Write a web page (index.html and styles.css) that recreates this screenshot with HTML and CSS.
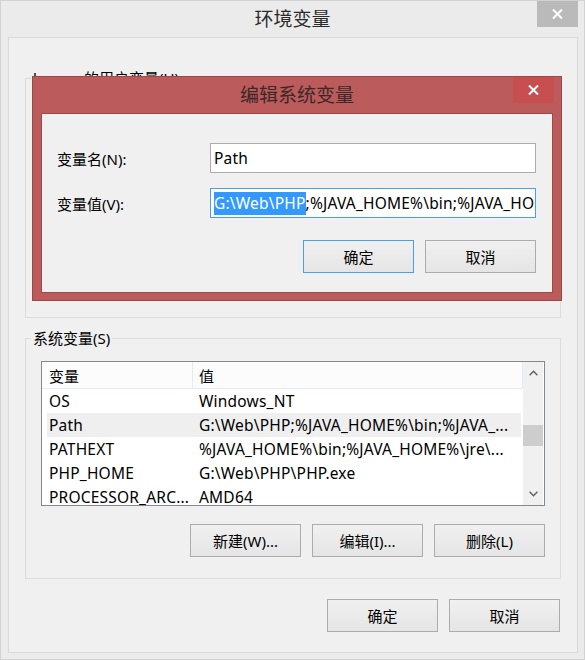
FILE: index.html
```html
<!DOCTYPE html>
<html lang="zh-CN">
<head>
<meta charset="utf-8">
<title>环境变量</title>
<link rel="stylesheet" href="styles.css">
</head>
<body>
<div class="window">
  <div class="titlebar">
    <span class="title">环境变量</span>
    <div class="close close-main"><svg width="11" height="10" viewBox="0 0 11 10"><path d="M1 0.5L10 9.5M10 0.5L1 9.5" stroke="#fff" stroke-width="2"/></svg></div>
  </div>
  <div class="panel">
    <div class="group group-user">
      <span class="legend">lenovo 的用户变量(U)</span>
    </div>
    <div class="group group-sys">
      <span class="legend">系统变量(S)</span>
      <div class="listbox">
        <div class="list-main">
          <div class="list-head">
            <div class="h1">变量</div>
            <div class="h2">值</div>
          </div>
          <div class="rows">
            <div class="row"><div class="c1">OS</div><div class="c2">Windows_NT</div></div>
            <div class="row row-sel"><div class="c1">Path</div><div class="c2">G:\Web\PHP;%JAVA_HOME%\bin;%JAVA_...</div></div>
            <div class="row"><div class="c1">PATHEXT</div><div class="c2">%JAVA_HOME%\bin;%JAVA_HOME%\jre\...</div></div>
            <div class="row"><div class="c1">PHP_HOME</div><div class="c2">G:\Web\PHP\PHP.exe</div></div>
            <div class="row"><div class="c1">PROCESSOR_ARC...</div><div class="c2">AMD64</div></div>
          </div>
        </div>
        <div class="scrollbar">
          <div class="arrow"><svg width="9" height="6" viewBox="0 0 9 6"><path d="M0.6 5.2L4.5 1.2L8.4 5.2" fill="none" stroke="#606060" stroke-width="1.4"/></svg></div>
          <div class="track"><div class="thumb"></div></div>
          <div class="arrow"><svg width="9" height="6" viewBox="0 0 9 6"><path d="M0.6 0.8L4.5 4.8L8.4 0.8" fill="none" stroke="#606060" stroke-width="1.4"/></svg></div>
        </div>
      </div>
      <div class="btnrow">
        <div class="btn">新建(W)...</div>
        <div class="btn">编辑(I)...</div>
        <div class="btn">删除(L)</div>
      </div>
    </div>
    <div class="btnrow main-btns">
      <div class="btn">确定</div>
      <div class="btn">取消</div>
    </div>
  </div>

  <div class="dialog">
    <div class="dlg-title">
      <span class="title dlg-title-text">编辑系统变量</span>
      <div class="close close-dlg"><svg width="11" height="10" viewBox="0 0 11 10"><path d="M1 0.5L10 9.5M10 0.5L1 9.5" stroke="#fff" stroke-width="2"/></svg></div>
    </div>
    <div class="dlg-body">
      <div class="form">
        <div class="lbl">变量名(N):</div>
        <div class="field latin">Path</div>
        <div class="lbl">变量值(V):</div>
        <div class="field field-focus latin"><span class="sel">G:\Web\PHP</span>;%JAVA_HOME%\bin;%JAVA_HO</div>
      </div>
      <div class="btnrow dlg-btns">
        <div class="btn btn-default">确定</div>
        <div class="btn">取消</div>
      </div>
    </div>
  </div>
</div>
</body>
</html>
```

FILE: styles.css
```css
* { box-sizing: border-box; }
html, body { margin: 0; padding: 0; }
body {
  font-family: "Noto Sans", "Noto Sans CJK SC", sans-serif;
  font-size: 15px;
  color: #000;
  background: #ebebeb;
}
.window {
  position: relative;
  width: 585px;
  height: 660px;
  background: #ebebeb;
  border: 1px solid #d2d2d2;
}
.titlebar {
  position: relative;
  height: 36px;
  display: flex;
  align-items: center;
  justify-content: center;
}
.title {
  font-size: 19px;
  color: #2b2b2b;
  line-height: 24px;
}
.close {
  position: absolute;
  top: 0;
  width: 41px;
  height: 26px;
  display: flex;
  align-items: center;
  justify-content: center;
}
.close-main { right: 6px; background: #bababa; }
.panel {
  margin-left: 7px;
  width: 570px;
  height: 616px;
  background: #f0f0f0;
  border: 1px solid #dadada;
  padding: 40px 16px 0 16px;
}
.group {
  position: relative;
  border: 1px solid #dcdcdc;
}
.group-user { height: 240px; }
.group-sys {
  margin-top: 20px;
  height: 241px;
  padding: 22px 15px 0 15px;
}
.legend {
  position: absolute;
  top: -10px;
  left: 5px;
  padding: 0 2px;
  line-height: 18px;
  background: #f0f0f0;
  white-space: nowrap;
}
.listbox {
  display: flex;
  height: 145px;
  border: 1px solid #828790;
  background: #fff;
  overflow: hidden;
}
.list-main {
  width: 481px;
  display: flex;
  flex-direction: column;
  overflow: hidden;
}
.list-head {
  flex: none;
  display: flex;
  height: 27px;
  background: #fcfcfd;
  border-bottom: 1px solid #e3ebf6;
  border-right: 1px solid #e3ebf6;
}
.h1 {
  width: 151px;
  padding-left: 7px;
  border-right: 1px solid #e3ebf6;
  display: flex;
  align-items: center;
}
.h2 {
  padding-left: 6px;
  display: flex;
  align-items: center;
}
.rows {
  flex: none;
  padding: 0 2px 0 5px;
}
.row {
  display: flex;
  height: 24px;
  align-items: center;
  white-space: nowrap;
  font-size: 15.5px;
  letter-spacing: 0.2px;
}
.row-sel { background: #efefef; }
.c1 {
  width: 152px;
  flex: none;
  padding-left: 2px;
  overflow: hidden;
}
.c2 {
  flex: 1;
  overflow: hidden;
}
.scrollbar {
  width: 20px;
  margin-right: 1px;
  background: #f0f0f0;
  display: flex;
  flex-direction: column;
}
.arrow {
  flex: none;
  height: 22px;
  display: flex;
  align-items: center;
  justify-content: center;
}
.track {
  flex: 1;
  padding-top: 41px;
}
.thumb {
  height: 21px;
  background: #cdcdcd;
}
.btnrow {
  display: flex;
  justify-content: flex-end;
  gap: 11px;
}
.group-sys .btnrow { margin-top: 18px; }
.main-btns {
  margin-top: 20px;
  margin-right: 1px;
}
.btn {
  width: 111px;
  height: 33px;
  border: 1px solid #acacac;
  background: linear-gradient(#f0f0f0, #e5e5e5);
  display: flex;
  align-items: center;
  justify-content: center;
  white-space: nowrap;
}
.btn-default { border-color: #4a9fe8; }

.dialog {
  position: absolute;
  left: 31px;
  top: 75px;
  width: 530px;
  height: 225px;
  background: #bc5b5b;
  border: 1px solid #9f4646;
  padding: 0 8px 7px 8px;
  display: flex;
  flex-direction: column;
}
.dlg-title {
  position: relative;
  height: 36px;
  display: flex;
  align-items: center;
  justify-content: center;
}
.dlg-title-text { color: #3a2828; }
.close-dlg { right: -1px; background: #c84f4f; }
.dlg-body {
  flex: 1;
  background: #f0f0f0;
  border: 1px solid #a04848;
  padding: 29px 16px 0 15px;
}
.form {
  display: grid;
  grid-template-columns: 153px 326px;
  row-gap: 15px;
  align-items: center;
}
.lbl { white-space: nowrap; }
.field {
  height: 30px;
  border: 1px solid #abadb3;
  background: #fff;
  padding: 0 3px;
  display: flex;
  align-items: center;
  white-space: nowrap;
  overflow: hidden;
}
.latin {
  font-size: 15.5px;
  letter-spacing: 0.2px;
}
.field-focus { border-color: #4a9fe8; }
.sel {
  background: #3399ff;
  color: #fff;
  line-height: 23px;
}
.dlg-btns { margin-top: 22px; }
```
